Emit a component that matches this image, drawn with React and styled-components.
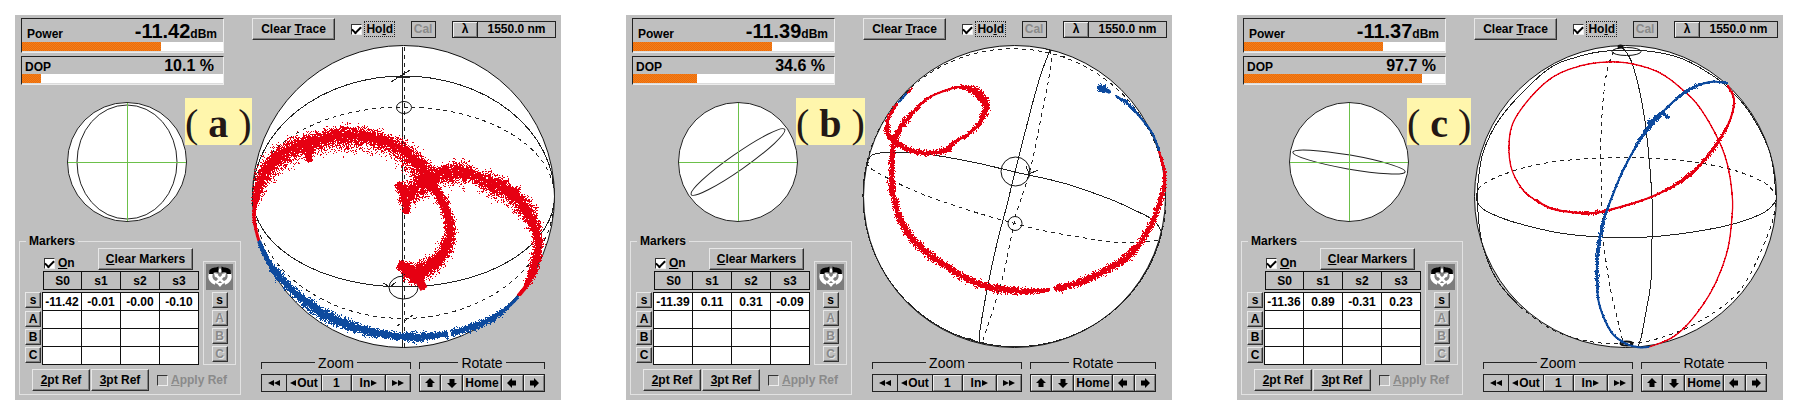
import { useId } from 'react';
import styled, { createGlobalStyle, css } from 'styled-components';

const RED = '#e60012';
const BLUE = '#0d4a9e';

/* ---------- trace helpers ---------- */

const createRandom = (seed) => {
  let s = seed;
  return () => {
    s = (s * 1664525 + 1013904223) % 4294967296;
    return s / 4294967296;
  };
};

const spline = (p0, p1, p2, p3, t) =>
  0.5 * (2 * p1 + (p2 - p0) * t + (2 * p0 - 5 * p1 + 4 * p2 - p3) * t * t + (3 * p1 - p0 - 3 * p2 + p3) * t * t * t);

// points: [x, y, half width]
const samplePoints = (points) => {
  const result = [];
  for (let i = 0; i < points.length - 1; i++) {
    const p = [points[Math.max(i - 1, 0)], points[i], points[i + 1], points[Math.min(i + 2, points.length - 1)]];
    const length = Math.hypot(p[2][0] - p[1][0], p[2][1] - p[1][1]);
    const steps = Math.max(2, Math.ceil(length));
    for (let k = 0; k < steps; k++) {
      const t = k / steps;
      result.push([
        spline(p[0][0], p[1][0], p[2][0], p[3][0], t),
        spline(p[0][1], p[1][1], p[2][1], p[3][1], t),
        (p[1][2] ?? 1) + ((p[2][2] ?? 1) - (p[1][2] ?? 1)) * t,
      ]);
    }
  }
  const last = points[points.length - 1];
  result.push([last[0], last[1], last[2] ?? 1]);
  return result;
};

const linePath = (points) =>
  samplePoints(points)
    .map(([x, y], i) => `${i ? 'L' : 'M'}${x.toFixed(1)} ${y.toFixed(1)}`)
    .join('');

// skew pushes the loose samples to the right hand side of the direction of travel
const cloudPath = (points, seed, skew = 0) => {
  const random = createRandom(seed);
  const samples = samplePoints(points);
  const pixels = new Set();
  let ripple = 1;
  samples.forEach(([x, y, w], i) => {
    const [ax, ay] = samples[Math.max(i - 1, 0)];
    const [bx, by] = samples[Math.min(i + 1, samples.length - 1)];
    const length = Math.hypot(bx - ax, by - ay) || 1;
    const nx = -(by - ay) / length;
    const ny = (bx - ax) / length;
    ripple = ripple * 0.5 + (0.5 + random()) * 0.5;
    const count = Math.ceil(w * 4.5);
    for (let k = 0; k < count; k++) {
      const spread = (random() + random() + random() - 1.5) * 0.9;
      let d = spread * w * ripple;
      if (skew && random() < 0.2) d += skew * random() * w;
      const along = random() * 2 - 1;
      const px = Math.round(x + nx * d - ny * along - 0.5);
      const py = Math.round(y + ny * d + nx * along - 0.5);
      pixels.add(`M${px} ${py + 0.5}h1`);
    }
  });
  return [...pixels].join('');
};

const Line = ({ points, dashed }) => <Ink d={linePath(points)} $dashed={dashed} />;

const Cloud = ({ points, color, seed, skew, core = 0.7 }) => (
  <>
    {core > 0 && <Core d={linePath(points)} stroke={color} strokeWidth={core} />}
    <Dots d={cloudPath(points, seed, skew)} stroke={color} />
  </>
);

/* ---------- spheres ---------- */

const SphereA = () => (
  <>
    <Ink d="M0.5 151.5A151 120.5 0 0 1 302.5 151.5" />
    <Ink d="M0.5 151.5A151 122 0 0 0 302.5 151.5" $dashed />
    <Ink d="M0.5 151.5A151 89.5 0 0 1 302.5 151.5" $dashed />
    <Ink d="M0.5 151.5A151 90.5 0 0 0 302.5 151.5" />
    <Ink d="M150.5 2V302" />
    <Ink d="M152.5 2V302" $dashed />
    <Ink d="M139 37L158 25M131 238L138 242L144 237M144 32H158" />
    <Ink d="M145 281L164 268" $dashed />
    <ellipse cx="152" cy="62.5" rx="7.5" ry="6" />
    <ellipse cx="151.5" cy="242.5" rx="14.5" ry="11.5" />
    <Cloud
      color={RED}
      seed={11}
      skew={1.3}
      core={4}
      points={[
        [3, 160, 3], [5, 146, 5], [12, 128, 8], [22, 115, 9], [37, 104, 9], [53, 98, 9], [71, 93, 9], [95, 90, 10],
        [118, 92, 9], [138, 98, 8], [155, 108, 9], [168, 120, 9], [178, 136, 9],
      ]}
    />
    <Cloud
      color={RED}
      seed={23}
      core={5}
      points={[
        [176, 132, 7], [185, 147, 6], [192, 160, 6], [197, 175, 6], [198, 188, 6], [194, 203, 7], [184, 217, 9],
        [170, 226, 9], [157, 224, 6], [147, 219, 4],
      ]}
    />
    <Cloud color={RED} seed={29} core={8} points={[[148, 219, 5], [158, 228, 9], [166, 234, 7], [172, 244, 1]]} />
    <Cloud color={RED} seed={31} core={2} points={[[53, 98, 9], [56, 106, 6], [58, 116, 3]]} />
    <Cloud color={RED} seed={37} core={5} points={[[147, 138, 4], [151, 149, 6], [154, 158, 6], [154, 168, 3]]} />
    <Cloud
      color={RED}
      seed={41}
      skew={1}
      core={2}
      points={[
        [155, 148, 10], [168, 140, 11], [181, 131, 9], [191, 126, 8], [203, 127, 10], [215, 127, 10], [222, 131, 5],
        [235, 136, 9], [251, 143, 10], [264, 151, 9],
      ]}
    />
    <Cloud
      color={RED}
      seed={43}
      core={4}
      points={[
        [256, 145, 6], [266, 154, 9], [275, 166, 9], [281, 178, 8], [286, 192, 6], [285, 208, 6], [281, 226, 5],
        [274, 241, 3], [267, 250, 1],
      ]}
    />
    <Cloud color={RED} seed={47} core={3} points={[[3, 156, 3], [2, 172, 2], [4, 185, 1], [7, 196, 1]]} />
    <Cloud
      color={BLUE}
      seed={53}
      core={4}
      points={[
        [7, 196, 1], [12, 208, 3], [20, 222, 3], [32, 237, 5], [48, 252, 5], [68, 267, 6], [91, 278, 6], [115, 286, 5],
        [138, 290, 4], [161, 292, 5], [178, 291, 4], [195, 289, 4],
      ]}
    />
    <Cloud
      color={BLUE}
      seed={59}
      core={3}
      points={[[200, 288, 4], [221, 282, 4], [241, 273, 4], [256, 262, 2], [266, 252, 1]]}
    />
  </>
);

const SphereB = () => (
  <>
    <Ink d="M4 117A151.5 148 13 0 1 299 187" $dashed />
    <Ink d="M4 117A151.5 149.5 13 0 0 299 187" />
    <Line points={[[187, 5], [174, 42], [152, 127], [144, 160], [134, 198], [124, 245], [117, 285], [116, 298]]} />
    <Line
      dashed
      points={[[187, 5], [188, 20], [179, 68], [167, 125], [155, 163], [151, 178], [139, 235], [120, 295]]}
    />
    <Line
      points={[
        [5, 115], [12, 109], [37, 107], [70, 110], [114, 118], [152, 127], [200, 138], [244, 153], [269, 164],
        [290, 175], [299, 187],
      ]}
    />
    <Line
      dashed
      points={[[5, 117], [10, 125], [54, 147], [105, 165], [150, 178], [187, 187], [250, 197], [277, 197], [296, 195]]}
    />
    <circle cx="152.5" cy="126.5" r="14.5" />
    <circle cx="152" cy="178.5" r="7" />
    <Ink d="M163 121L166 129L175 125M180 3L190 6M197 12L202 11M105 293L117 298L121 297" />
    <Cloud color={RED} seed={3} points={[[49, 43, 1], [45, 48, 1]]} />
    <Cloud color={BLUE} seed={5} core={2} points={[[43, 49, 1], [36, 57, 1]]} />
    <Cloud
      color={RED}
      seed={7}
      core={2}
      points={[
        [34, 59, 1], [27, 70, 2], [24, 80, 3], [26, 91, 3], [34, 98, 3], [47, 105, 3], [64, 108, 3], [84, 105, 3],
        [90, 98, 2], [107, 88, 2], [117, 77, 3], [123, 62, 4], [119, 52, 5], [110, 45, 5], [97, 42, 2], [84, 45, 1],
        [67, 52, 1], [54, 63, 2], [42, 77, 3], [34, 89, 3], [30, 102, 3], [29, 122, 3], [29, 142, 4], [34, 165, 3],
        [37, 174, 4], [48, 192, 4], [64, 208, 4], [84, 222, 4], [104, 234, 4], [127, 242, 4], [154, 246, 4],
        [174, 246, 3], [186, 245, 2],
      ]}
    />
    <Cloud
      color={RED}
      seed={9}
      core={2}
      points={[
        [192, 244, 4], [217, 237, 4], [240, 227, 4], [264, 212, 4], [277, 198, 3], [289, 178, 3], [297, 157, 3],
        [301, 142, 2], [301, 125, 2], [296, 106, 1],
      ]}
    />
    <Cloud
      color={BLUE}
      seed={13}
      core={2}
      points={[[296, 105, 1], [289, 88, 1], [277, 72, 1], [265, 59, 2], [253, 51, 1]]}
    />
    <Cloud color={BLUE} seed={17} core={4} points={[[235, 42, 3], [240, 44, 4], [247, 47, 1]]} />
  </>
);

const SphereC = () => (
  <>
    <Line
      points={[
        [3, 155], [4, 138], [9, 108], [23, 78], [46, 50], [76, 23], [103, 12], [133, 6], [173, 6], [206, 13],
        [233, 27], [253, 42], [276, 68], [296, 108], [302, 150],
      ]}
    />
    <Line
      dashed
      points={[
        [302, 150], [301, 165], [293, 192], [273, 235], [253, 258], [219, 280], [186, 293], [159, 298], [119, 297],
        [79, 285], [46, 262],
      ]}
    />
    <Line points={[[46, 262], [23, 235], [8, 198], [3, 155]]} />
    <Line
      points={[
        [2, 152], [5, 160], [16, 168], [43, 178], [86, 188], [129, 192], [173, 192], [219, 187], [259, 179],
        [289, 168], [301, 157], [302, 151],
      ]}
    />
    <Line
      dashed
      points={[
        [2, 152], [6, 142], [23, 132], [53, 122], [86, 116], [129, 113], [173, 113], [219, 117], [259, 125],
        [289, 137], [302, 149],
      ]}
    />
    <Line
      points={[
        [148, 2], [158, 18], [168, 58], [174, 102], [178, 155], [178, 188], [177, 235], [171, 272], [167, 293],
        [163, 303],
      ]}
    />
    <Line
      dashed
      points={[
        [146, 2], [138, 10], [131, 38], [127, 88], [127, 128], [128, 162], [129, 192], [136, 242], [143, 272],
        [149, 297],
      ]}
    />
    <ellipse cx="152.5" cy="6.5" rx="14.5" ry="4" />
    <Pole cx="152.5" cy="298.5" rx="6" ry="2" />
    <Pole cx="146.5" cy="1.5" rx="2" ry="1" />
    <Cloud
      color={RED}
      seed={19}
      core={1.3}
      points={[
        [175, 302, 0.3], [199, 292, 0.3], [219, 273, 0.3], [239, 243, 0.3], [253, 207, 0.3], [258, 172, 0.3],
        [258, 148, 0.3], [253, 118, 0.3], [243, 92, 0.3], [226, 63, 0.3], [209, 45, 0.3], [186, 28, 0.3],
        [159, 19, 0.3], [133, 17, 0.3], [106, 21, 0.3], [79, 32, 0.3], [56, 53, 0.3], [39, 78, 0.3], [35, 102, 0.3],
        [38, 125, 0.3], [49, 145, 0.6], [64, 157, 1],
      ]}
    />
    <Cloud
      color={RED}
      seed={61}
      core={2}
      points={[
        [62, 155, 1], [76, 163, 1], [96, 167, 1], [119, 168, 2], [139, 164, 1], [166, 156, 1], [186, 148, 1],
        [206, 137, 2], [226, 120, 2], [244, 97, 2], [256, 75, 1], [260, 55, 1], [254, 41, 1],
      ]}
    />
    <Cloud
      color={BLUE}
      seed={67}
      core={2}
      points={[
        [253, 38, 1], [236, 37, 1], [216, 44, 2], [199, 57, 1], [183, 73, 2], [169, 90, 2], [156, 112, 1],
        [146, 132, 1], [138, 152, 1], [133, 165, 1], [129, 178, 2], [124, 205, 2], [123, 228, 2], [125, 258, 1],
        [136, 285, 1], [149, 297, 1], [163, 302, 0.3], [175, 302, 0.3],
      ]}
    />
    <Cloud color={BLUE} seed={71} core={2} points={[[175, 78, 3], [186, 70, 3], [189, 68, 2], [194, 73, 2]]} />
  </>
);

/* ---------- icons ---------- */

const Arrow = ({ turn = 0 }) => (
  <svg width="10" height="10" viewBox="-5 -5 10 10" aria-hidden="true">
    <path d="M0 -5L5 0H2.5V4H-2.5V0H-5Z" fill="#000" transform={`rotate(${turn})`} />
  </svg>
);

const Triangles = ({ left, count = 1 }) => (
  <svg width={count * 6} height="6" viewBox={`0 0 ${count * 6} 6`} aria-hidden="true">
    {Array.from({ length: count }, (_, i) => (
      <path key={i} d={left ? `M${i * 6 + 6} 0V6L${i * 6} 3Z` : `M${i * 6} 0V6L${i * 6 + 6} 3Z`} fill="#000" />
    ))}
  </svg>
);

const SwapIcon = () => (
  <svg width="26" height="26" viewBox="0 0 26 26" aria-hidden="true">
    <path d="M4 9Q1.500 16 8.500 19M22 9Q24.500 16 17.500 19" fill="none" stroke="#fff" strokeWidth="4" />
    <path d="M9 11L17 19M17 11L9 19" stroke="#fff" strokeWidth="2.500" />
    <path d="M13 4L16.500 8.500H9.500ZM13 23L9.500 19H16.500ZM7 9L11.500 10L8 13.500ZM19 9L14.500 10L18 13.500Z" fill="#fff" />
    <path d="M2 10L2.500 6Q5 3 9 3.500L11.500 2.500V9L9 8Q6.500 7.500 6 10Z" fill="#000" />
    <path d="M24 10L23.500 6Q21 3 17 3.500L14.500 2.500V9L17 8Q19.500 7.500 20 10Z" fill="#000" />
  </svg>
);

/* ---------- panels ---------- */

const PANELS = [
  {
    id: 'a', power: '-11.42', powerLevel: 69, dop: '10.1 %', dopLevel: 9.5,
    ellipse: { rx: 50, ry: 57, angle: 0 }, row: ['-11.42', '-0.01', '-0.00', '-0.10'], Sphere: SphereA,
  },
  {
    id: 'b', power: '-11.39', powerLevel: 69, dop: '34.6 %', dopLevel: 32,
    ellipse: { rx: 57, ry: 8, angle: -35 }, row: ['-11.39', '0.11', '0.31', '-0.09'], Sphere: SphereB,
  },
  {
    id: 'c', power: '-11.37', powerLevel: 69, dop: '97.7 %', dopLevel: 88.5,
    ellipse: { rx: 57, ry: 7, angle: 10 }, row: ['-11.36', '0.89', '-0.31', '0.23'], Sphere: SphereC,
  },
];

const Markers = ({ values }) => {
  const id = useId();
  return (
    <MarkerGroup>
      <legend>Markers</legend>
      <MarkerBody>
        <MarkerMain>
          <MarkerTop>
            <CheckLabel>
              <CheckBox type="checkbox" defaultChecked />
              <span>
                <u>O</u>n
              </span>
            </CheckLabel>
            <Button $width={95}>
              <u>C</u>lear Markers
            </Button>
          </MarkerTop>
          <MarkerTable>
            <thead>
              <tr>
                <td />
                {['S0', 's1', 's2', 's3'].map((name) => (
                  <th key={name} scope="col">
                    {name}
                  </th>
                ))}
              </tr>
            </thead>
            <tbody>
              {['s', 'A', 'B', 'C'].map((name, i) => (
                <tr key={name}>
                  <RowHead scope="row">
                    <SmallButton>{name}</SmallButton>
                  </RowHead>
                  {values.map((value, k) => (
                    <td key={k}>{i === 0 ? value : ''}</td>
                  ))}
                </tr>
              ))}
            </tbody>
          </MarkerTable>
        </MarkerMain>
        <SwapBox>
          <SwapFace>
            <SwapIcon />
          </SwapFace>
          {['s', 'A', 'B', 'C'].map((name, i) => (
            <SmallButton key={name} disabled={i > 0} aria-label={`Move to ${name}`}>
              {name}
            </SmallButton>
          ))}
        </SwapBox>
      </MarkerBody>
      <RefRow>
        <Button $width={58}>
          <u>2</u>pt Ref
        </Button>
        <Button $width={58}>
          <u>3</u>pt Ref
        </Button>
        <ApplyLabel htmlFor={id}>
          <CheckBox id={id} type="checkbox" disabled />
          <span>
            <u>A</u>pply Ref
          </span>
        </ApplyLabel>
      </RefRow>
    </MarkerGroup>
  );
};

const Panel = ({ data }) => {
  const { id, power, powerLevel, dop, dopLevel, ellipse, row, Sphere } = data;
  return (
    <PanelWrapper>
      <LeftColumn>
        <Meter>
          <PowerHead>
            <span>Power</span>
            <PowerValue>
              <strong>{power}</strong>dBm
            </PowerValue>
          </PowerHead>
          <Track>
            <Fill style={{ width: `${powerLevel}%` }} />
          </Track>
        </Meter>
        <Meter>
          <DopHead>
            <span>DOP</span>
            <DopValue>{dop}</DopValue>
          </DopHead>
          <Track>
            <Fill style={{ width: `${dopLevel}%` }} />
          </Track>
        </Meter>
        <DialArea>
          <Dial viewBox="-60 -60 120 120">
            <circle r="59.5" fill="#fff" stroke="#222" />
            <ellipse rx={ellipse.rx} ry={ellipse.ry} fill="none" stroke="#222" transform={`rotate(${ellipse.angle})`} />
            <path d="M-59 0.5H59M0.5 -59V59" stroke="#6cc04a" />
          </Dial>
          <Badge>
            ( <b>{id}</b> )
          </Badge>
        </DialArea>
        <Markers values={row} />
      </LeftColumn>
      <RightColumn>
        <Toolbar>
          <Button $width={83}>
            Clear <u>T</u>race
          </Button>
          <CheckLabel>
            <CheckBox type="checkbox" defaultChecked />
            <HoldText>
              Ho<u>l</u>d
            </HoldText>
          </CheckLabel>
          <CalButton disabled>Cal</CalButton>
          <Wavelength>
            <LambdaButton aria-label="Wavelength">λ</LambdaButton>
            <output>1550.0 nm</output>
          </Wavelength>
        </Toolbar>
        <SphereView viewBox="0 0 304 304">
          <circle cx="151.5" cy="151.5" r="151" fill="#fff" />
          <Sphere />
        </SphereView>
        <Controls>
          <ControlGroup $grow={150}>
            <GroupTitle>Zoom</GroupTitle>
            <KeyRow>
              <Key $grow={24} $flat aria-label="Zoom out fully">
                <Triangles left count={2} />
              </Key>
              <Key $grow={36} $flat>
                <Triangles left />
                Out
              </Key>
              <Key $grow={29}>1</Key>
              <Key $grow={35}>
                In
                <Triangles />
              </Key>
              <Key $grow={24} aria-label="Zoom in fully">
                <Triangles count={2} />
              </Key>
            </KeyRow>
          </ControlGroup>
          <ControlGroup $grow={126}>
            <GroupTitle>Rotate</GroupTitle>
            <KeyRow>
              <Key $grow={21} aria-label="Rotate up">
                <Arrow />
              </Key>
              <Key $grow={21} aria-label="Rotate down">
                <Arrow turn={180} />
              </Key>
              <Key $grow={41}>Home</Key>
              <Key $grow={21} aria-label="Rotate left">
                <Arrow turn={-90} />
              </Key>
              <Key $grow={21} aria-label="Rotate right">
                <Arrow turn={90} />
              </Key>
            </KeyRow>
          </ControlGroup>
        </Controls>
      </RightColumn>
    </PanelWrapper>
  );
};

const App = () => (
  <>
    <GlobalStyle />
    <Page>
      {PANELS.map((data) => (
        <Panel key={data.id} data={data} />
      ))}
    </Page>
  </>
);

export default App;

const GlobalStyle = createGlobalStyle`
  * {
    box-sizing: border-box;
  }
  body {
    margin: 0;
    background: #fff;
    color: #000;
    font: bold 12px/14px 'Liberation Sans', Arial, sans-serif;
  }
  button {
    font: inherit;
    color: inherit;
    padding: 0;
    white-space: nowrap;
  }
`;

const raised = css`
  background: #bfbfbf;
  border: 1px solid;
  border-color: #e8e8e8 #303030 #303030 #e8e8e8;
  box-shadow: inset -1px -1px #808080;
`;

const Page = styled.main`
  display: grid;
  grid-template-columns: repeat(3, 1fr);
  align-items: start;
  gap: 65px;
  padding: 15px 16px 15px 15px;
`;

const PanelWrapper = styled.section`
  display: grid;
  grid-template-columns: 222px 1fr;
  gap: 11px;
  padding: 3px 5px 5px 4px;
  background: #bfbfbf;
`;

const LeftColumn = styled.div`
  display: flex;
  flex-direction: column;
`;

const Meter = styled.div`
  width: 203px;
  margin: 0 0 3px 2px;
  border: 1px solid;
  border-color: #222 #ececec #ececec #222;
`;

const MeterHead = styled.div`
  display: flex;
  justify-content: space-between;
  align-items: baseline;
`;

const PowerHead = styled(MeterHead)`
  height: 23px;
  padding: 3px 6px 0 5px;
`;

const DopHead = styled(MeterHead)`
  height: 17px;
  padding: 0 9px 0 3px;
`;

const PowerValue = styled.span`
  strong {
    font-size: 20px;
    line-height: 18px;
  }
`;

const DopValue = styled.span`
  font-size: 16px;
  line-height: 18px;
`;

const Track = styled.div`
  height: 10px;
  background: #fff;
  border-bottom: 1px solid #dcdcdc;
`;

const Fill = styled.div`
  height: 9px;
  background: repeating-conic-gradient(#f0660c 0 25%, #ee8418 0 50%) 0 0 / 2px 2px;
`;

const DialArea = styled.div`
  position: relative;
  margin: 14px 0 12px 48px;
`;

const Dial = styled.svg`
  display: block;
  width: 120px;
`;

const Badge = styled.div`
  position: absolute;
  top: -4px;
  left: 118px;
  height: 47px;
  background: #fff6ac;
  color: #231815;
  font: 40px/52px 'Liberation Serif', 'Times New Roman', serif;
  white-space: nowrap;
`;

const MarkerGroup = styled.fieldset`
  min-width: 0;
  margin: 0;
  padding: 0 4px 3px 5px;
  border: 1px solid #e2e2e2;

  legend {
    margin-left: 1px;
    padding: 0 3px;
  }
`;

const MarkerBody = styled.div`
  display: flex;
  align-items: flex-end;
  justify-content: space-between;
`;

const MarkerMain = styled.div`
  width: 174px;
`;

const MarkerTop = styled.div`
  display: flex;
  justify-content: space-between;
  align-items: flex-end;
  padding: 0 6px 0 19px;
`;

const Button = styled.button`
  ${raised};
  width: ${({ $width }) => $width}px;
  height: 22px;
`;

const SmallButton = styled.button`
  ${raised};
  display: block;
  width: 16px;
  height: 16px;
  line-height: 12px;

  &:disabled {
    color: #8a8a8a;
    text-shadow: 1px 1px #e4e4e4;
  }
`;

const CheckLabel = styled.label`
  display: flex;
  align-items: center;
  gap: 3px;
`;

const ApplyLabel = styled(CheckLabel)`
  margin-left: 7px;
  color: #8a8a8a;
`;

const CheckBox = styled.input`
  appearance: none;
  display: grid;
  place-items: center;
  width: 11px;
  height: 11px;
  margin: 0;
  background: #fff;
  border: 1px solid;
  border-color: #333 #eee #eee #333;

  &:disabled {
    background: #bfbfbf;
  }

  &:checked::after {
    content: '';
    width: 7px;
    height: 4px;
    border: solid #000;
    border-width: 0 0 2px 2px;
    transform: rotate(-45deg);
  }
`;

const MarkerTable = styled.table`
  width: 100%;
  margin-top: 1px;
  table-layout: fixed;
  border-collapse: separate;
  border-spacing: 0;

  th,
  td {
    height: 18px;
    padding: 0;
    text-align: center;
    line-height: 16px;
    border: solid #111;
    border-width: 0 1px 1px 0;
  }

  thead th {
    height: 19px;
    border-top-width: 1px;
  }

  thead th:nth-child(2) {
    border-left-width: 1px;
  }

  thead td {
    width: 18px;
    border-width: 0;
  }

  tbody td {
    background: #fff;
  }

  tbody tr:first-child td {
    height: 19px;
    border-top-width: 1px;
  }

  tbody::before {
    content: '';
    display: block;
    height: 2px;
  }
`;

const RowHead = styled.th`
  && {
    border-bottom-width: 0;
    vertical-align: top;
  }
`;

const SwapBox = styled.div`
  display: flex;
  flex-direction: column;
  align-items: center;
  gap: 2px;
  width: 33px;
  padding: 2px;
  border: 1px solid #e2e2e2;
`;

const SwapFace = styled.div`
  display: grid;
  place-items: center;
  width: 27px;
  height: 26px;
  background: #7d7d7d;
`;

const RefRow = styled.div`
  display: flex;
  align-items: center;
  gap: 1px;
  margin-top: 4px;
  padding-left: 7px;
`;

const RightColumn = styled.div`
  min-width: 0;
`;

const Toolbar = styled.div`
  display: flex;
  align-items: center;
  justify-content: space-between;
  height: 22px;
  margin-bottom: 5px;
`;

const HoldText = styled.span`
  padding: 0 1px;
  outline: 1px dotted #222;
`;

const CalButton = styled.button`
  width: 25px;
  height: 17px;
  background: #bfbfbf;
  border: 1px solid #222;

  &:disabled {
    color: #8a8a8a;
  }
`;

const Wavelength = styled.div`
  display: flex;
  height: 17px;

  output {
    width: 79px;
    border: 1px solid #222;
    line-height: 15px;
    text-align: center;
  }
`;

const LambdaButton = styled.button`
  width: 25px;
  background: #bfbfbf;
  border: 1px solid #222;
  border-right-width: 0;
  box-shadow: inset 1px 1px #f0f0f0, inset -1px -1px #808080;
  line-height: 15px;
`;

const SphereView = styled.svg`
  display: block;
  width: 100%;
  overflow: visible;

  circle,
  ellipse {
    stroke: #111;
    stroke-width: 1;
  }

  ellipse,
  circle ~ circle {
    fill: none;
  }
`;

const Ink = styled.path`
  fill: none;
  stroke: #222;
  stroke-width: 1;
  stroke-dasharray: ${({ $dashed }) => ($dashed ? '4 4' : 'none')};
  shape-rendering: crispEdges;
`;

const Core = styled.path`
  fill: none;
  stroke-linejoin: round;
`;

const Dots = styled.path`
  fill: none;
  stroke-width: 1;
  shape-rendering: crispEdges;
`;

const Pole = styled.ellipse`
  && {
    stroke-width: 2;
  }
`;

const Controls = styled.div`
  display: flex;
  gap: 8px;
  margin-top: 7px;
  padding: 0 11px 0 9px;
`;

const ControlGroup = styled.div`
  flex: ${({ $grow }) => $grow} 1 0;
  min-width: 0;
`;

const GroupTitle = styled.div`
  display: flex;
  gap: 3px;
  font-size: 14px;
  font-weight: normal;

  &::before,
  &::after {
    content: '';
    flex: 1;
    height: 6px;
    margin-top: 6px;
    border-top: 1px solid #222;
  }

  &::before {
    border-left: 1px solid #222;
  }

  &::after {
    border-right: 1px solid #222;
  }
`;

const KeyRow = styled.div`
  display: flex;
  gap: 1px;
  margin-top: 4px;
  padding: 1px;
  background: #222;
`;

const Key = styled.button`
  flex: ${({ $grow }) => $grow} 1 0;
  min-width: 0;
  height: 16px;
  display: flex;
  align-items: center;
  justify-content: center;
  gap: 1px;
  background: #bfbfbf;
  border: 1px solid;
  border-color: ${({ $flat }) => ($flat ? '#bfbfbf' : '#eee #808080 #808080 #eee')};
`;
